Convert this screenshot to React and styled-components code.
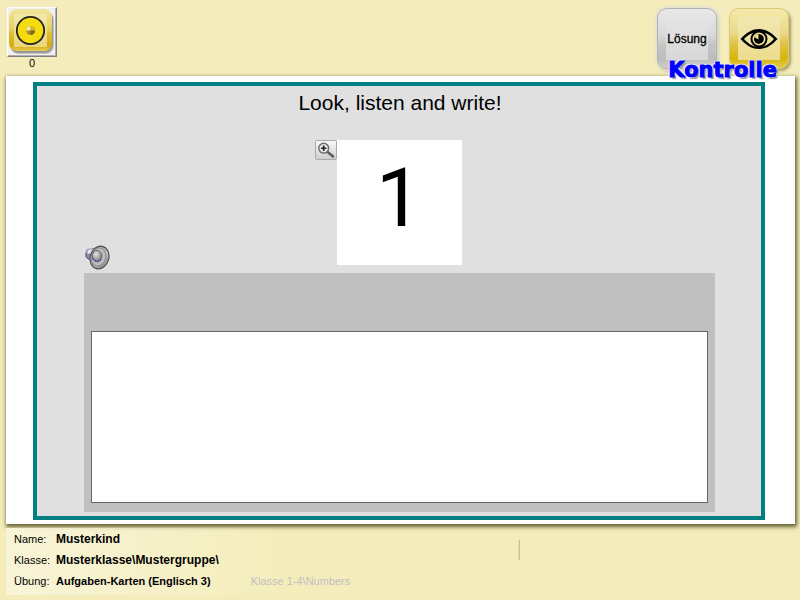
import styled, { createGlobalStyle } from "styled-components";

const COLOR = {
  page: "#f4edbb",
  teal: "#008080",
  board: "#e0e0e0",
  panel: "#c0c0c0",
};

const GlobalStyle = createGlobalStyle`
  *, *::before, *::after {
    box-sizing: border-box;
  }

  body {
    margin: 0;
    background: ${COLOR.page};
    color: #000;
    font-family: "Liberation Sans", Arial, sans-serif;
  }
`;

const Page = styled.div`
  display: flex;
  flex-direction: column;
  min-height: 100vh;
`;

const TopBar = styled.header`
  display: flex;
  justify-content: space-between;
  height: 76px;
  padding: 7px 11px 0 7px;
`;

const Counter = styled.div`
  display: flex;
  flex-direction: column;
  align-items: center;
  width: 50px;
`;

const CoinButton = styled.button`
  display: flex;
  width: 50px;
  height: 50px;
  padding: 0;
  border: 1px solid;
  border-color: #fff #808080 #808080 #fff;
  background: #f0f0f0;
  box-shadow: inset -1px -1px #b0b0b0;
`;

const CounterValue = styled.span`
  font-size: 11px;
  line-height: 13px;
`;

const CheckGroup = styled.div`
  position: relative;
  display: flex;
  gap: 12px;
  padding-top: 1px;
`;

const CheckButton = styled.button`
  display: flex;
  align-items: center;
  justify-content: center;
  width: 60px;
  height: 61px;
  padding: 0;
  border: 1px solid ${({ $gold }) => ($gold ? "#dcca78" : "#b2b2b2")};
  border-radius: 10px;
  background: ${({ $gold }) =>
    $gold
      ? "linear-gradient(#f4eaac 0%, #ead886 42%, #dfc448 58%, #d7b50a 84%, #e3ca50 100%)"
      : "linear-gradient(#e9e9e9 0%, #d9d9d9 45%, #c6c6c6 60%, #bcbcbc 85%, #d0d0d0 100%)"};
  box-shadow: ${({ $gold }) =>
    $gold
      ? "2px 2px 3px rgba(100, 85, 20, 0.55)"
      : "0 0 2px 2px rgba(225, 225, 215, 0.8), 1px 2px 3px rgba(90, 90, 90, 0.5)"};
`;

const CheckFace = styled.span`
  display: flex;
  align-items: center;
  justify-content: center;
  width: 42px;
  height: 43px;
  background: ${({ $gold }) =>
    $gold
      ? "linear-gradient(#f2e8b0, #ebdb8e)"
      : "linear-gradient(#e4e4e4, #d8d8d8)"};
  color: #000;
  font-family: "Liberation Sans", Arial, sans-serif;
  font-size: 12px;
  -webkit-text-stroke: 0.3px #000;
`;

const CheckCaption = styled.span`
  position: absolute;
  right: 12px;
  bottom: -6px;
  color: #00f;
  font-family: "DejaVu Sans", Verdana, sans-serif;
  font-size: 21px;
  font-weight: bold;
  line-height: 24px;
  -webkit-text-stroke: 1px #00f;
  text-shadow: -1px -1px 1px #fff, 1px -1px 1px #fff, -1px 1px 1px #fff,
    2px 2px 1px #999;
  pointer-events: none;
`;

const Sheet = styled.main`
  display: flex;
  flex: 1;
  margin: 0 5px 0 6px;
  padding: 6px 30px 4px 27px;
  background: #fff;
  box-shadow: 1px 2px 4px 1px rgba(75, 70, 30, 0.85);
`;

const Board = styled.section`
  display: flex;
  flex: 1;
  flex-direction: column;
  padding-bottom: 4px;
  border: 4px solid ${COLOR.teal};
  background: ${COLOR.board};
`;

const Title = styled.h1`
  margin: 0;
  padding: 5px 0 25px 2px;
  font-size: 21px;
  font-weight: normal;
  line-height: 24px;
  text-align: center;
`;

const CardRow = styled.div`
  display: grid;
  grid-template-columns: 1fr 125px 1fr;
  height: 133px;
`;

const CardTools = styled.div`
  display: flex;
  justify-content: space-between;
  padding-left: 48px;
`;

const ZoomButton = styled.button`
  display: flex;
  width: 22px;
  height: 20px;
  padding: 0;
  border: 1px solid #aaa;
  border-radius: 2px;
  background: linear-gradient(#f8f8f8, #cfcfcf);
`;

const SoundButton = styled.button`
  display: flex;
  align-self: flex-end;
  width: 26px;
  height: 26px;
  margin-bottom: 2px;
  padding: 0;
  border: 0;
  background: none;
`;

const Card = styled.div`
  height: 125px;
  background: #fff;
  font-family: Roboto, sans-serif;
  font-size: 82px;
  line-height: 117px;
  text-align: center;
`;

const AnswerPanel = styled.div`
  display: flex;
  flex: 1;
  margin: 0 46px 0 47px;
  padding: 58px 7px 9px;
  background: ${COLOR.panel};
`;

const AnswerField = styled.textarea`
  flex: 1;
  min-width: 0;
  margin: 0;
  padding: 4px;
  border: 1px solid #666;
  border-radius: 0;
  background: #fff;
  font-family: "Liberation Sans", Arial, sans-serif;
  font-size: 20px;
  resize: none;
  outline: none;
`;

const Footer = styled.footer`
  display: flex;
  height: 76px;
  padding: 4px 6px 5px;
`;

const InfoList = styled.dl`
  flex: 1;
  margin: 0;
  padding: 1px 8px 3px;
  background: linear-gradient(to right, #f8f4d7, rgba(244, 237, 187, 0) 280px);
`;

const InfoRow = styled.div`
  display: flex;
  font-size: 11px;
  line-height: 21px;
`;

const InfoLabel = styled.dt`
  width: 42px;
`;

const InfoValue = styled.dd`
  margin: 0;
  font-size: ${({ $small }) => ($small ? "11px" : "12px")};
  font-weight: bold;
`;

const InfoPath = styled.dd`
  margin: 0 0 0 40px;
  color: #c0c0c0;
`;

const Status = styled.div`
  flex: 1;
`;

const Divider = styled.div`
  width: 2px;
  height: 20px;
  margin: 12px 0 0 110px;
  border-right: 1px solid #c9c194;
  background: #e5dda9;
`;

const CoinIcon = () => (
  <svg width="48" height="48" viewBox="0 0 48 48" aria-hidden="true">
    <defs>
      <linearGradient id="coinFrame" x1="0" y1="0" x2="0" y2="1">
        <stop offset="0" stopColor="#f1e59c" />
        <stop offset="0.48" stopColor="#e6cf62" />
        <stop offset="0.6" stopColor="#dcbd30" />
        <stop offset="0.88" stopColor="#d4ae08" />
        <stop offset="1" stopColor="#e6cc58" />
      </linearGradient>
      <linearGradient id="coinFace" x1="0" y1="0" x2="0" y2="1">
        <stop offset="0" stopColor="#f2e8a8" />
        <stop offset="1" stopColor="#ead77c" />
      </linearGradient>
    </defs>
    <rect x="3" y="4" width="43" height="42" rx="8" fill="#c4c4c4" />
    <rect x="2" y="3" width="43" height="42" rx="8" fill="#999" />
    <rect x="1" y="1" width="43" height="42" rx="8" fill="url(#coinFrame)" />
    <rect x="6" y="6" width="33" height="33" fill="url(#coinFace)" />
    <circle cx="22.500" cy="22.500" r="13.700" fill="#f4dc10" stroke="#222" strokeWidth="1.800" />
    <circle cx="22.500" cy="22.500" r="4.500" fill="#a8902a" />
    <path d="M22.500 22.500V18A4.500 4.500 0 0 0 18 22.500Z" fill="#f5ecae" />
    <path d="M22.500 22.500V18A4.500 4.500 0 0 1 27 22.500Z" fill="#d4b92c" />
    <path d="M22.500 22.500H27A4.500 4.500 0 0 1 22.500 27Z" fill="#7c6a1c" />
  </svg>
);

const EyeIcon = () => (
  <svg width="38" height="22" viewBox="0 0 38 22" aria-hidden="true">
    <path
      fillRule="evenodd"
      d="M0.500 11C7 4 12.500 1 19 1s12 3 18.500 10C31 18 25.500 21 19 21S7 18 0.500 11ZM4 11c5 5.500 9.500 8 15 8s10-2.500 15-8c-5-5-9.500-7-15-7S9 6 4 11Z"
    />
    <circle cx="19" cy="11" r="7.500" fill="none" stroke="#000" strokeWidth="2" />
    <circle cx="19" cy="11" r="5" />
    <path d="M18.500 11.500V6a5.500 5.500 0 0 0-4.500 3Z" fill="#eddc8a" />
    <path d="M20 5.500c6 1.500 6 9.500-1 11" fill="none" stroke="#eddc8a" />
  </svg>
);

const MagnifierIcon = () => (
  <svg width="20" height="18" viewBox="0 0 20 18" aria-hidden="true">
    <path d="M11 10.500l6 5" stroke="#5c5c5c" strokeWidth="2.600" strokeLinecap="round" />
    <circle cx="7.700" cy="7.200" r="4.900" fill="#e8e8e8" stroke="#6c6c6c" strokeWidth="1.500" />
    <path d="M7.700 4.500v5.400M5 7.200h5.400" stroke="#222" strokeWidth="1.600" />
  </svg>
);

const SpeakerIcon = () => (
  <svg width="26" height="26" viewBox="0 0 26 26" aria-hidden="true">
    <defs>
      <linearGradient id="speakerRing" x1="0" y1="0" x2="1" y2="1">
        <stop offset="0" stopColor="#888" />
        <stop offset="0.5" stopColor="#c8c8c8" />
        <stop offset="1" stopColor="#777" />
      </linearGradient>
      <radialGradient id="speakerCone" cx="0.4" cy="0.35" r="0.7">
        <stop offset="0" stopColor="#e4e4e4" />
        <stop offset="0.6" stopColor="#a4a4a4" />
        <stop offset="1" stopColor="#707070" />
      </radialGradient>
    </defs>
    <path d="M2 4l7-1v15l-7-5Q-1 8 2 4Z" fill="#8c8c9c" />
    <path d="M2.500 5l5-1v4l-5 1Z" fill="#e4e4f4" />
    <path d="M1 8v4l5 4" fill="none" stroke="#5050a0" />
    <ellipse cx="14.500" cy="12.500" rx="9.300" ry="11.500" transform="rotate(15 14.500 12.500)" fill="url(#speakerRing)" stroke="#505050" strokeWidth="1.200" />
    <ellipse cx="13.500" cy="12" rx="7.200" ry="9.200" transform="rotate(15 13.500 12)" fill="#bdbdbd" stroke="#8a8a8a" />
    <ellipse cx="12" cy="11" rx="4.800" ry="5.500" fill="url(#speakerCone)" stroke="#6a6a6a" />
    <path d="M7.500 13q4.500 6.500 8.500 1.500" fill="none" stroke="#4646b4" strokeWidth="1.400" strokeDasharray="2 1" />
  </svg>
);

const App = () => {
  return (
    <Page>
      <GlobalStyle />
      <TopBar>
        <Counter>
          <CoinButton type="button" aria-label="Punkte">
            <CoinIcon />
          </CoinButton>
          <CounterValue>0</CounterValue>
        </Counter>
        <CheckGroup>
          <CheckButton type="button">
            <CheckFace>Lösung</CheckFace>
          </CheckButton>
          <CheckButton type="button" $gold aria-label="Kontrolle">
            <CheckFace $gold>
              <EyeIcon />
            </CheckFace>
          </CheckButton>
          <CheckCaption>Kontrolle</CheckCaption>
        </CheckGroup>
      </TopBar>
      <Sheet>
        <Board>
          <Title>Look, listen and write!</Title>
          <CardRow>
            <CardTools>
              <SoundButton type="button" aria-label="Anhören">
                <SpeakerIcon />
              </SoundButton>
              <ZoomButton type="button" aria-label="Vergrößern">
                <MagnifierIcon />
              </ZoomButton>
            </CardTools>
            <Card>1</Card>
          </CardRow>
          <AnswerPanel>
            <AnswerField aria-label="Antwort" />
          </AnswerPanel>
        </Board>
      </Sheet>
      <Footer>
        <InfoList>
          <InfoRow>
            <InfoLabel>Name:</InfoLabel>
            <InfoValue>Musterkind</InfoValue>
          </InfoRow>
          <InfoRow>
            <InfoLabel>Klasse:</InfoLabel>
            <InfoValue>Musterklasse\Mustergruppe\</InfoValue>
          </InfoRow>
          <InfoRow>
            <InfoLabel>Übung:</InfoLabel>
            <InfoValue $small>Aufgaben-Karten (Englisch 3)</InfoValue>
            <InfoPath>Klasse 1-4\Numbers</InfoPath>
          </InfoRow>
        </InfoList>
        <Status>
          <Divider />
        </Status>
      </Footer>
    </Page>
  );
};

export default App;
